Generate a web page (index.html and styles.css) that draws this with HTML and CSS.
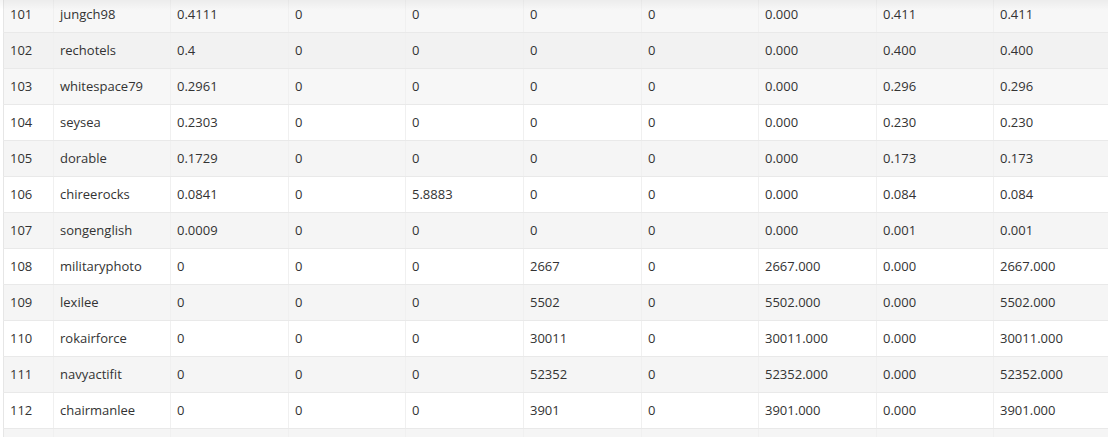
FILE: index.html
```html
<!DOCTYPE html>
<html>
<head>
<meta charset="utf-8">
<link rel="stylesheet" href="styles.css">
</head>
<body>
<div class="view">
  <div class="shade"></div>
  <table class="grid">
    <colgroup>
      <col class="c-num"><col class="c-a"><col class="c-b"><col class="c-a"><col class="c-b"><col class="c-b"><col class="c-a"><col class="c-b"><col class="c-a"><col>
    </colgroup>
    <tbody>
      <tr class="r-top"><td>101</td><td>jungch98</td><td>0.4111</td><td>0</td><td>0</td><td>0</td><td>0</td><td>0.000</td><td>0.411</td><td>0.411</td></tr>
      <tr class="r-hover"><td>102</td><td>rechotels</td><td>0.4</td><td>0</td><td>0</td><td>0</td><td>0</td><td>0.000</td><td>0.400</td><td>0.400</td></tr>
      <tr class="r-top"><td>103</td><td>whitespace79</td><td>0.2961</td><td>0</td><td>0</td><td>0</td><td>0</td><td>0.000</td><td>0.296</td><td>0.296</td></tr>
      <tr><td>104</td><td>seysea</td><td>0.2303</td><td>0</td><td>0</td><td>0</td><td>0</td><td>0.000</td><td>0.230</td><td>0.230</td></tr>
      <tr class="r-alt"><td>105</td><td>dorable</td><td>0.1729</td><td>0</td><td>0</td><td>0</td><td>0</td><td>0.000</td><td>0.173</td><td>0.173</td></tr>
      <tr><td>106</td><td>chireerocks</td><td>0.0841</td><td>0</td><td>5.8883</td><td>0</td><td>0</td><td>0.000</td><td>0.084</td><td>0.084</td></tr>
      <tr class="r-alt"><td>107</td><td>songenglish</td><td>0.0009</td><td>0</td><td>0</td><td>0</td><td>0</td><td>0.000</td><td>0.001</td><td>0.001</td></tr>
      <tr><td>108</td><td>militaryphoto</td><td>0</td><td>0</td><td>0</td><td>2667</td><td>0</td><td>2667.000</td><td>0.000</td><td>2667.000</td></tr>
      <tr class="r-alt"><td>109</td><td>lexilee</td><td>0</td><td>0</td><td>0</td><td>5502</td><td>0</td><td>5502.000</td><td>0.000</td><td>5502.000</td></tr>
      <tr><td>110</td><td>rokairforce</td><td>0</td><td>0</td><td>0</td><td>30011</td><td>0</td><td>30011.000</td><td>0.000</td><td>30011.000</td></tr>
      <tr class="r-alt"><td>111</td><td>navyactifit</td><td>0</td><td>0</td><td>0</td><td>52352</td><td>0</td><td>52352.000</td><td>0.000</td><td>52352.000</td></tr>
      <tr><td>112</td><td>chairmanlee</td><td>0</td><td>0</td><td>0</td><td>3901</td><td>0</td><td>3901.000</td><td>0.000</td><td>3901.000</td></tr>
      <tr class="r-alt"><td></td><td></td><td></td><td></td><td></td><td></td><td></td><td></td><td></td><td></td></tr>
    </tbody>
  </table>
</div>
</body>
</html>
```

FILE: styles.css
```css
html, body {
  margin: 0;
  padding: 0;
  background: #ffffff;
}

.view {
  position: relative;
  width: 1108px;
  height: 437px;
  overflow: hidden;
  padding-left: 3px;
  box-sizing: border-box;
}

.shade {
  position: absolute;
  left: 0;
  top: 0;
  right: 0;
  height: 10px;
  background: linear-gradient(rgba(0, 0, 0, 0.045), rgba(0, 0, 0, 0));
  pointer-events: none;
  z-index: 2;
}

.grid {
  margin-top: -4px;
  width: 1106px;
  table-layout: fixed;
  border-collapse: collapse;
  font-family: "Open Sans", "Noto Sans", sans-serif;
  font-size: 13px;
  color: #333333;
}

.c-num { width: 50px; }
.c-a { width: 117px; }
.c-b { width: 118px; }

.grid td {
  height: 36px;
  padding: 0 6px;
  box-sizing: border-box;
  border-left: 1px solid #f0f0f0;
  border-bottom: 1px solid #e9e9e9;
  white-space: nowrap;
  overflow: hidden;
  vertical-align: middle;
  line-height: 18px;
}

.grid td:first-child {
  border-left: 1px solid #e6e6e6;
}

.grid tr {
  background: #ffffff;
}

.grid tr.r-alt {
  background: #f5f5f5;
}

.grid tr.r-top {
  background: #f7f7f7;
}

.grid tr.r-hover {
  background: #f2f2f2;
}
```
